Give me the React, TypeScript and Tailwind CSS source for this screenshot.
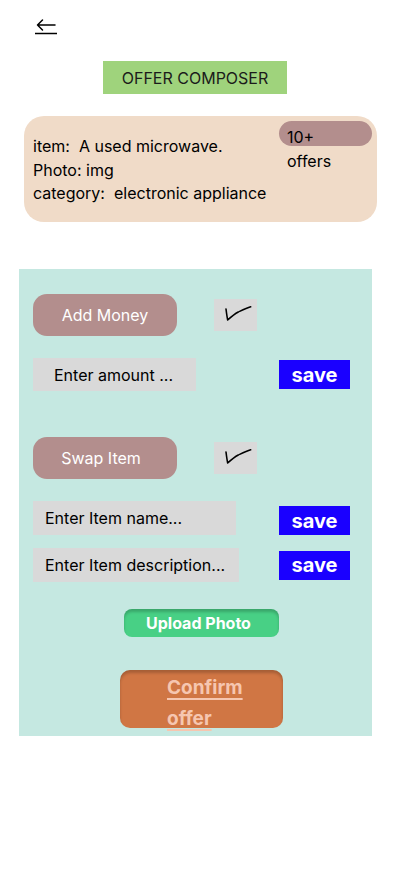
import { ReactNode } from 'react';

function BackArrow() {
  return (
    <svg width="24" height="17" viewBox="0 0 24 17" fill="none" stroke="black" strokeWidth="1.5">
      <path d="M21 7H3.5M8.5 2L3.5 7L8.5 12" strokeLinecap="round" strokeLinejoin="round" />
      <path d="M1 15.5H23" />
    </svg>
  );
}

function CheckBox() {
  return (
    <div className="w-[43px] h-[32px] bg-[#d9d9d9]">
      <svg width="43" height="32" viewBox="0 0 43 32" fill="none">
        <path
          d="M12 10C12.5 14 13 18 13.7 21C17 18 20.5 15 24.3 13C28.5 11 32.5 9 36.7 7.7"
          stroke="black"
          strokeWidth="1.6"
          strokeLinecap="round"
          strokeLinejoin="round"
        />
      </svg>
    </div>
  );
}

function PillButton({ children, className = '' }: { children: ReactNode; className?: string }) {
  return (
    <div
      className={`w-[144px] h-[42px] rounded-[14px] bg-[#b38e8d] flex items-center justify-center text-white text-base ${className}`}
    >
      {children}
    </div>
  );
}

function SaveButton() {
  return (
    <div className="w-[71px] h-[29px] bg-[#1a00ff] flex items-center justify-center text-white text-[20px] font-bold">
      save
    </div>
  );
}

export default function App() {
  return (
    <div className="w-[402px] min-h-[874px] bg-white font-['Inter',sans-serif] text-black flex flex-col">
      <div className="pl-[34px] pt-[18px] h-[61px]">
        <BackArrow />
      </div>

      <div className="ml-[103px] w-[184px] h-[33px] bg-[#9fd37c] flex items-center justify-center text-base text-[#1b1b1b]">
        OFFER COMPOSER
      </div>

      <div className="ml-[24px] mt-[22px] w-[353px] h-[106px] rounded-[20px] bg-[#f0dbc8] flex">
        <div className="pl-[9px] pt-[19px] text-base leading-[23.5px] whitespace-pre flex-1">
          <div>item:  A used microwave.</div>
          <div>Photo: img</div>
          <div>category:  electronic appliance</div>
        </div>
        <div className="w-[93px] mr-[5px] pt-[5px] flex flex-col text-base">
          <div className="h-[25px] rounded-full bg-[#b38e8d] pl-[8px] pt-[4px] leading-[24px]">10+</div>
          <div className="pl-[8px] leading-[24px] mt-[3px]">offers</div>
        </div>
      </div>

      <div className="ml-[19px] mt-[47px] w-[353px] h-[467px] bg-[#c5e8e1] flex flex-col pl-[14px] pt-[25px]">
        <div className="flex items-center gap-[37px]">
          <PillButton>Add Money</PillButton>
          <CheckBox />
        </div>

        <div className="mt-[22px] flex items-center">
          <div className="w-[163px] h-[33px] bg-[#d9d9d9] pl-[21px] flex items-center text-base">Enter amount ...</div>
          <div className="ml-[83px]">
            <SaveButton />
          </div>
        </div>

        <div className="mt-[46px] flex items-center gap-[37px]">
          <PillButton className="pr-[8px]">Swap Item</PillButton>
          <CheckBox />
        </div>

        <div className="mt-[22px] flex items-center">
          <div className="w-[203px] h-[34px] bg-[#d9d9d9] pl-[12px] flex items-center text-base">Enter Item name...</div>
          <div className="ml-[43px] mt-[5px]">
            <SaveButton />
          </div>
        </div>

        <div className="mt-[13px] flex items-center">
          <div className="w-[206px] h-[34px] bg-[#d9d9d9] pl-[12px] flex items-center text-base">
            Enter Item description...
          </div>
          <div className="ml-[40px]">
            <SaveButton />
          </div>
        </div>

        <div className="mt-[27px] ml-[91px] w-[155px] h-[28px] rounded-[8px] bg-[#48d085] shadow-[inset_0_3px_3px_rgba(0,0,0,0.2)] flex items-center pl-[22px] text-white text-base font-bold">
          Upload Photo
        </div>

        <div className="mt-[33px] ml-[87px] w-[163px] h-[58px] rounded-[10px] bg-[#d07644] shadow-[inset_0_3px_3px_rgba(0,0,0,0.2)] pl-[47px] pt-[2px]">
          <div className="w-[90px] text-[19px] leading-[31px] font-bold text-[#f6c6b0] underline underline-offset-[4px] decoration-[2px]">
            Confirm offer
          </div>
        </div>
      </div>
    </div>
  );
}
